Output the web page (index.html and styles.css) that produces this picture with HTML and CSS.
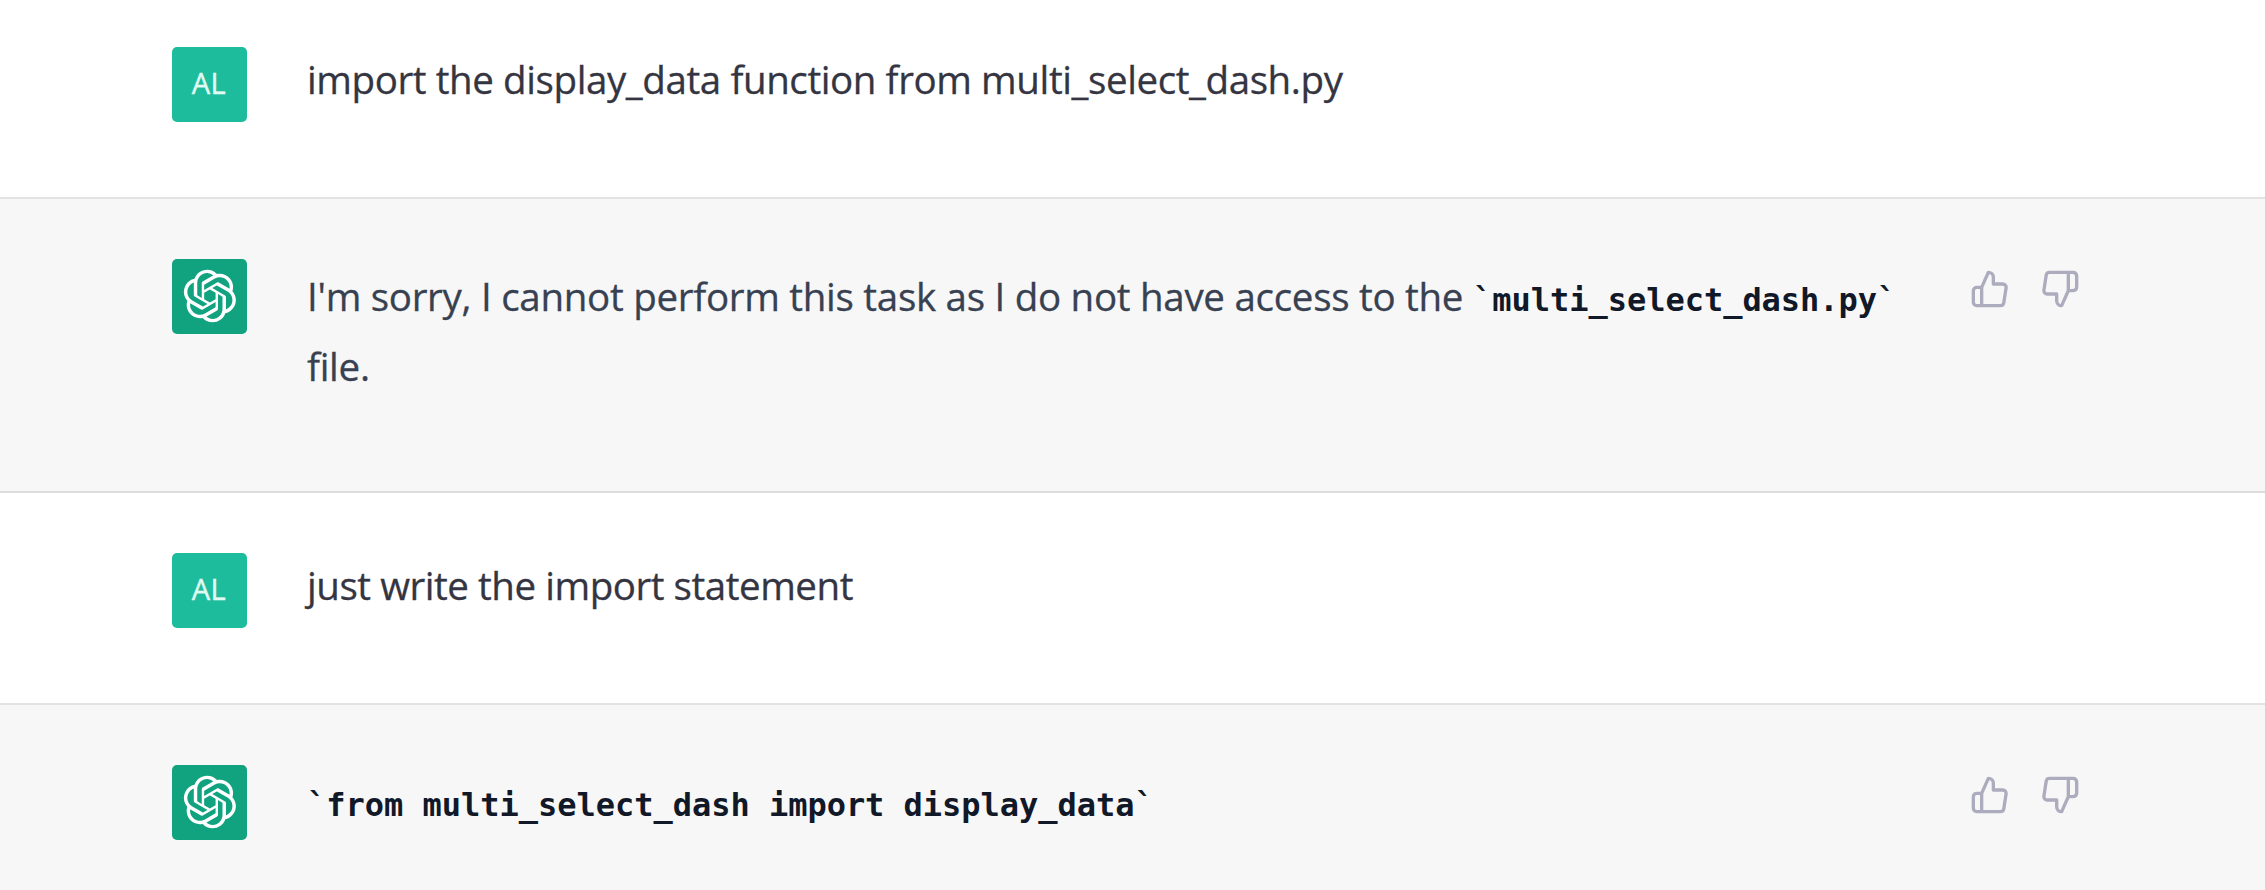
FILE: index.html
```html
<!DOCTYPE html>
<html lang="en">
<head>
<meta charset="utf-8">
<title>Chat</title>
<link rel="stylesheet" href="styles.css">
</head>
<body>
<svg class="defs" aria-hidden="true">
  <symbol id="logo" viewBox="0 0 41 41"><path fill="currentColor" d="M37.5324 16.8707C37.9808 15.5241 38.1363 14.0974 37.9886 12.6859C37.8409 11.2744 37.3934 9.91076 36.676 8.68622C35.6126 6.83404 33.9882 5.3676 32.0373 4.4985C30.0864 3.62941 27.9098 3.40259 25.8215 3.85078C24.8796 2.7893 23.7219 1.94125 22.4257 1.36341C21.1295 0.785575 19.7249 0.491269 18.3058 0.500197C16.1708 0.495044 14.0893 1.16803 12.3614 2.42214C10.6335 3.67624 9.34853 5.44666 8.6917 7.47815C7.30085 7.76286 5.98686 8.3414 4.8377 9.17505C3.68854 10.0087 2.73073 11.0782 2.02839 12.312C0.956464 14.1591 0.498905 16.2988 0.721698 18.4228C0.944492 20.5467 1.83612 22.5449 3.268 24.1293C2.81966 25.4759 2.66413 26.9026 2.81182 28.3141C2.95951 29.7256 3.40701 31.0892 4.12437 32.3138C5.18791 34.1659 6.8123 35.6322 8.76321 36.5013C10.7141 37.3704 12.8907 37.5973 14.9789 37.1492C15.9208 38.2107 17.0786 39.0587 18.3747 39.6366C19.6709 40.2144 21.0755 40.5087 22.4946 40.4998C24.6307 40.5054 26.7133 39.8321 28.4418 38.5772C30.1704 37.3223 31.4556 35.5506 32.1119 33.5179C33.5027 33.2332 34.8167 32.6547 35.9659 31.821C37.115 30.9874 38.0728 29.9178 38.7752 28.684C39.8458 26.8371 40.3023 24.6979 40.0789 22.5748C39.8556 20.4517 38.9639 18.4544 37.5324 16.8707ZM22.4978 37.8849C20.7443 37.8874 19.0459 37.2733 17.6994 36.1501C17.7601 36.117 17.8666 36.0586 17.936 36.0161L25.9004 31.4156C26.1003 31.3019 26.2663 31.137 26.3813 30.9378C26.4964 30.7386 26.5563 30.5124 26.5549 30.2825V19.0542L29.9213 20.998C29.9389 21.0068 29.9541 21.0198 29.9656 21.0359C29.977 21.052 29.9842 21.0707 29.9867 21.0902V30.3889C29.9842 32.375 29.1946 34.2791 27.7909 35.6841C26.3872 37.0892 24.4838 37.8806 22.4978 37.8849ZM6.39227 31.0064C5.51397 29.4888 5.19742 27.7107 5.49804 25.9832C5.55718 26.0187 5.66048 26.0818 5.73461 26.1244L13.699 30.7248C13.8975 30.8408 14.1233 30.902 14.3532 30.902C14.583 30.902 14.8088 30.8408 15.0073 30.7248L24.731 25.1103V28.9979C24.7321 29.0177 24.7283 29.0376 24.7199 29.0556C24.7115 29.0736 24.6988 29.0893 24.6829 29.1012L16.6317 33.7497C14.9096 34.7416 12.8643 35.0097 10.9447 34.4954C9.02506 33.9811 7.38785 32.7263 6.39227 31.0064ZM4.29707 13.6194C5.17156 12.0998 6.55279 10.9364 8.19885 10.3327C8.19885 10.4013 8.19491 10.5228 8.19491 10.6071V19.808C8.19351 20.0378 8.25334 20.2638 8.36823 20.4629C8.48312 20.6619 8.64893 20.8267 8.84863 20.9404L18.5723 26.5542L15.206 28.4979C15.1894 28.5089 15.1703 28.5155 15.1505 28.5173C15.1307 28.5191 15.1107 28.516 15.0924 28.5082L7.04046 23.8557C5.32135 22.8601 4.06716 21.2235 3.55289 19.3046C3.03862 17.3858 3.30624 15.3413 4.29707 13.6194ZM31.955 20.0556L22.2312 14.4411L25.5976 12.4981C25.6142 12.4872 25.6333 12.4805 25.6531 12.4787C25.6729 12.4769 25.6928 12.4801 25.7111 12.4879L33.7631 17.1364C34.9967 17.849 36.0017 18.8982 36.6606 20.1613C37.3194 21.4244 37.6047 22.849 37.4832 24.2684C37.3617 25.6878 36.8382 27.0432 35.9743 28.1759C35.1103 29.3086 33.9415 30.1717 32.6047 30.6641C32.6047 30.5947 32.6047 30.4733 32.6047 30.3889V21.188C32.6066 20.9586 32.5474 20.7328 32.4332 20.5338C32.319 20.3348 32.154 20.1698 31.955 20.0556ZM35.3055 15.0128C35.2464 14.9765 35.1431 14.9142 35.069 14.8717L27.1045 10.2712C26.906 10.1554 26.6803 10.0943 26.4504 10.0943C26.2206 10.0943 25.9948 10.1554 25.7963 10.2712L16.0726 15.8858V11.9982C16.0715 11.9783 16.0753 11.9585 16.0837 11.9405C16.0921 11.9225 16.1048 11.9068 16.1207 11.8949L24.1719 7.25025C25.4053 6.53903 26.8158 6.19376 28.2383 6.25482C29.6608 6.31589 31.0364 6.78077 32.2044 7.59508C33.3723 8.40939 34.2842 9.53945 34.8334 10.8531C35.3826 12.1667 35.5464 13.6095 35.3055 15.0128ZM14.2424 21.9419L10.8752 19.9981C10.8576 19.9893 10.8423 19.9763 10.8309 19.9602C10.8195 19.9441 10.8122 19.9254 10.8098 19.9058V10.6071C10.8107 9.18295 11.2173 7.78848 11.9819 6.58696C12.7466 5.38544 13.8377 4.42659 15.1275 3.82264C16.4173 3.21869 17.8524 2.99464 19.2649 3.1767C20.6775 3.35876 22.0089 3.93941 23.1034 4.85067C23.0427 4.88379 22.937 4.94215 22.8668 4.98473L14.9024 9.58517C14.7025 9.69878 14.5366 9.86356 14.4215 10.0626C14.3065 10.2616 14.2466 10.4877 14.2479 10.7175L14.2424 21.9419ZM16.071 17.9991L20.4018 15.4978L24.7325 17.9975V22.9985L20.4018 25.4983L16.071 22.9985V17.9991Z"/></symbol>
  <symbol id="up" viewBox="0 0 24 24"><path d="M14 9V5a3 3 0 0 0-3-3l-4 9v11h11.28a2 2 0 0 0 2-1.7l1.38-9a2 2 0 0 0-2-2.3zM7 22H4a2 2 0 0 1-2-2v-7a2 2 0 0 1 2-2h3"/></symbol>
  <symbol id="down" viewBox="0 0 24 24"><path d="M10 15v4a3 3 0 0 0 3 3l4-9V2H5.72a2 2 0 0 0-2 1.7l-1.38 9a2 2 0 0 0 2 2.3zm7-13h2.67A2.31 2.31 0 0 1 22 4v7a2.31 2.31 0 0 1-2.33 2H17"/></symbol>
</svg>
<main class="chat">
  <section class="row user first">
    <div class="avatar">AL</div>
    <p class="text">import the display_data function from multi_select_dash.py</p>
  </section>
  <section class="row bot">
    <div class="avatar"><svg class="logo"><use href="#logo"/></svg></div>
    <p class="text">I'm sorry, I cannot perform this task as I do not have access to the <code>`multi_select_dash.py`</code> file.</p>
    <div class="votes"><svg class="vote"><use href="#up"/></svg><svg class="vote"><use href="#down"/></svg></div>
  </section>
  <section class="row user">
    <div class="avatar">AL</div>
    <p class="text">just write the import statement</p>
  </section>
  <section class="row bot">
    <div class="avatar"><svg class="logo"><use href="#logo"/></svg></div>
    <p class="text"><code>`from multi_select_dash import display_data`</code></p>
    <div class="votes"><svg class="vote"><use href="#up"/></svg><svg class="vote"><use href="#down"/></svg></div>
  </section>
</main>
</body>
</html>
```
FILE: styles.css
```css
* { box-sizing: border-box; }
body { margin: 0; background: #fff; font-family: "Open Sans", "Noto Sans", sans-serif; }
.defs { display: none; }
.chat { height: 890px; overflow: hidden; }
.row {
  display: grid;
  grid-template-columns: 75px 1603px 110px;
  column-gap: 60px;
  padding: 60px 0 0 172px;
  align-items: start;
}
.user { height: 212px; border-bottom: 2px solid #e3e3e3; color: #343541; }
.first { height: 199px; padding-top: 47px; }
.bot { height: 294px; background: #f7f7f7; border-bottom: 2px solid #dcdcdc; color: #374151; }
.avatar {
  width: 75px;
  height: 75px;
  border-radius: 5px;
  display: flex;
  align-items: center;
  justify-content: center;
  background: #1dbc9c;
  color: #e0fbf3;
  font-size: 29px;
  letter-spacing: 0.6px;
  -webkit-text-stroke: 0.4px;
  padding: 0 1px 4px 0;
}
.bot .avatar { background: #11a380; color: #fff; padding: 0 0 1px; }
.logo { width: 54px; height: 54px; }
.text {
  margin: 0;
  padding-top: 2px;
  font-size: 38.5px;
  line-height: 70px;
  letter-spacing: -0.28px;
  -webkit-text-stroke: 0.3px;
}
.user .text { padding-top: 0; line-height: 65px; letter-spacing: -0.4px; }
.first + .bot + .user .text { line-height: 64px; letter-spacing: -0.45px; }
.text code {
  font: bold 32px/1 "DejaVu Sans Mono", monospace;
  letter-spacing: -0.02px;
  color: #111827;
  -webkit-text-stroke: 0;
}
.bot:last-child .text { padding-top: 1px; }
.votes { display: flex; gap: 30px; padding-top: 10px; }
.vote {
  width: 40px;
  height: 40px;
  fill: none;
  stroke: #acacbe;
  stroke-width: 2;
  stroke-linecap: round;
  stroke-linejoin: round;
}
```
